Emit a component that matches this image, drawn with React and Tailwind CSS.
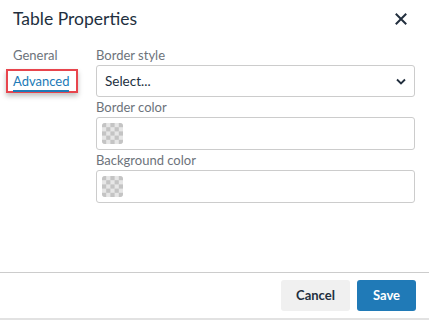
import React from "react";

function Checker() {
  const cells = [];
  for (let r = 0; r < 5; r++) {
    for (let c = 0; c < 5; c++) {
      if ((r + c) % 2 === 0) {
        cells.push(<rect key={`${r}-${c}`} x={c * 4} y={r * 4} width="4" height="4" fill="#c4c4c4" />);
      }
    }
  }
  return (
    <svg width="21" height="21" viewBox="0 0 20 20" className="rounded-[3px]">
      <rect width="20" height="20" fill="#e6e6e6" />
      {cells}
    </svg>
  );
}

function ColorInput({ label }) {
  return (
    <div>
      <div className="h-[20px] text-[13px] leading-[20px] text-[#6d737b]">{label}</div>
      <div className="flex h-[33px] items-center rounded-[3px] border border-[#cccccc] pl-[5px]">
        <Checker />
      </div>
    </div>
  );
}

export default function App() {
  return (
    <div
      className="flex h-[320px] w-[429px] flex-col border-b-2 border-[#e2e2e2] bg-white text-[#222f3e]"
      style={{ fontFamily: 'Lato, "Open Sans", sans-serif' }}
    >
      <div className="flex h-[36px] items-center justify-between pl-[13px] pr-[22px] pt-[2px]">
        <h1 className="text-[17.5px] leading-[24px]">Table Properties</h1>
        <svg width="12" height="12" viewBox="0 0 12 12" className="mt-[-1px]">
          <path d="M1.5 1.5 L10.5 10.5 M10.5 1.5 L1.5 10.5" stroke="#222f3e" strokeWidth="2" strokeLinecap="square" />
        </svg>
      </div>

      <div className="flex flex-1 pt-[9px]">
        <div className="w-[96px] shrink-0 text-[13px] leading-[20px]">
          <div className="pl-[13px] text-[#6d737b]">General</div>
          <div className="ml-[6px] mt-[4px] h-[24px] w-[72px] border-2 border-[#e8454d] pl-[5px] shadow-[0_3px_5px_rgba(0,0,0,0.25)]">
            <span className="border-b-2 border-[#207ab7] pb-[1px] text-[#207ab7] leading-[18px]">Advanced</span>
          </div>
        </div>

        <div className="mr-[14px] flex-1">
          <div className="h-[20px] text-[13px] leading-[20px] text-[#6d737b]">Border style</div>
          <div className="flex h-[32px] items-center justify-between rounded-[3px] border border-[#cccccc] pl-[8px] pr-[8px] text-[13.5px]">
            <span>Select...</span>
            <svg width="10" height="7" viewBox="0 0 10 7">
              <path d="M1 1.5 L5 5.5 L9 1.5" fill="none" stroke="#222f3e" strokeWidth="1.8" />
            </svg>
          </div>
          <ColorInput label="Border color" />
          <ColorInput label="Background color" />
        </div>
      </div>

      <div className="flex h-[46px] items-start justify-end gap-[7px] border-t border-[#cccccc] pr-[13px] pt-[7px]">
        <button className="h-[31px] w-[69px] rounded-[3px] bg-[#f0f0f0] text-[13px] font-bold text-[#222f3e]">
          Cancel
        </button>
        <button className="h-[31px] w-[59px] rounded-[3px] bg-[#207ab7] text-[13px] font-bold text-white">
          Save
        </button>
      </div>
    </div>
  );
}
